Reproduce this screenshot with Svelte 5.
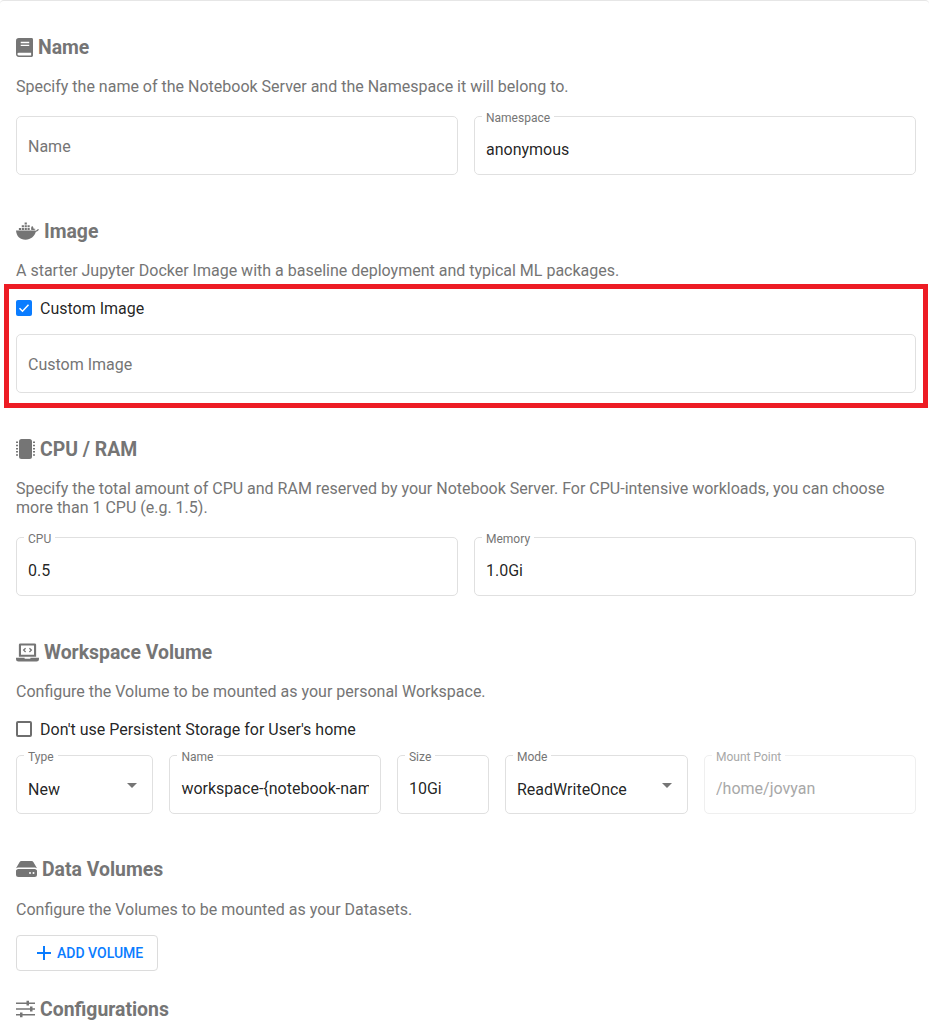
<script>
  const workspace = 'workspace-{notebook-name}';
</script>

<main>
  <section>
    <h2>
      <svg class="icon" width="17" height="19" viewBox="0 0 18 20">
        <path fill-rule="evenodd" d="M3 0h13.500A1.500 1.500 0 0 1 18 1.500V18.500A1.500 1.500 0 0 1 16.500 20H3a3 3 0 0 1-3-3V3a3 3 0 0 1 3-3zM5 4v1.500h9V4zM5 7v1.500h9V7zM3 15.500a1.500 1.500 0 0 0 0 3h13v-3z"/>
      </svg>
      Name
    </h2>
    <p>Specify the name of the Notebook Server and the Namespace it will belong to.</p>
    <div class="row two">
      <div class="field"><input placeholder="Name" readonly /></div>
      <div class="field"><span class="label">Namespace</span><input value="anonymous" readonly /></div>
    </div>
  </section>

  <section>
    <h2>
      <svg class="icon" width="23" height="18" viewBox="0 0 24 18">
        <path d="M0 8.500h19.500c.8.300 1.700 0 2.500-.9.500-.4 1.200-.5 2-.3-.6 1.500-1.800 2.500-3.300 2.600C19.200 15 15.500 18 10 18 4 18 .5 14.500 0 8.500z"/>
        <path d="M3 5.800h2.300v2.100H3zM6 5.800h2.300v2.100H6zM9 5.800h2.300v2.100H9zM12 5.800h2.300v2.100H12zM6 3h2.300v2.100H6zM9 3h2.300v2.100H9zM12 3h2.300v2.100H12zM9 .2h2.300v2.100H9z"/>
        <path d="M16 8c-.5-1.700-.2-3.200.8-4.300 1 .8 1.500 1.800 1.600 3 .7-.2 1.400-.1 2 .2-.4.700-1.200 1.100-2.200 1.100z"/>
      </svg>
      Image
    </h2>
    <p>A starter Jupyter Docker Image with a baseline deployment and typical ML packages.</p>
    <div class="highlight">
      <label class="check">
        <span class="box checked">
          <svg width="16" height="16" viewBox="0 0 16 16"><path d="M3.500 8.200l3 3 6-6.400" fill="none" stroke="#fff" stroke-width="1.500"/></svg>
        </span>
        Custom Image
      </label>
      <div class="field"><input placeholder="Custom Image" readonly /></div>
    </div>
  </section>

  <section class="cpu">
    <h2>
      <svg class="icon" width="19" height="20" viewBox="0 0 19 20">
        <rect x="3" y="0" width="13" height="20" rx="2.500"/>
        <path d="M0 2.500h2v1.500H0zM0 5.700h2v1.500H0zM0 8.900h2v1.500H0zM0 12.100h2v1.500H0zM0 15.300h2v1.500H0zM17 2.500h2v1.500h-2zM17 5.700h2v1.500h-2zM17 8.900h2v1.500h-2zM17 12.100h2v1.500h-2zM17 15.300h2v1.500h-2z"/>
      </svg>
      CPU / RAM
    </h2>
    <p>Specify the total amount of CPU and RAM reserved by your Notebook Server. For CPU-intensive workloads, you can choose more than 1 CPU (e.g. 1.5).</p>
    <div class="row two">
      <div class="field"><span class="label">CPU</span><input value="0.5" readonly /></div>
      <div class="field"><span class="label">Memory</span><input value="1.0Gi" readonly /></div>
    </div>
  </section>

  <section>
    <h2>
      <svg class="icon" width="23" height="19" viewBox="0 0 24 19">
        <path fill-rule="evenodd" d="M4.500 0h15A1.500 1.500 0 0 1 21 1.500V14H3V1.500A1.500 1.500 0 0 1 4.500 0zM5.200 2.200v9.600h13.600V2.200z"/>
        <path d="M0 15h9v1h6v-1h9v1.500A2.500 2.500 0 0 1 21.500 19h-19A2.500 2.500 0 0 1 0 16.500z"/>
        <path d="M10 5l-2 2 2 2M14 5l2 2-2 2" fill="none" stroke="#757575" stroke-width="1.400"/>
      </svg>
      Workspace Volume
    </h2>
    <p>Configure the Volume to be mounted as your personal Workspace.</p>
    <label class="check">
      <span class="box"></span>
      Don't use Persistent Storage for User's home
    </label>
    <div class="row volume">
      <div class="field"><span class="label">Type</span><div class="select">New</div></div>
      <div class="field"><span class="label">Name</span><input value={workspace} readonly /></div>
      <div class="field"><span class="label">Size</span><input value="10Gi" readonly /></div>
      <div class="field"><span class="label">Mode</span><div class="select">ReadWriteOnce</div></div>
      <div class="field disabled"><span class="label">Mount Point</span><input value="/home/jovyan" readonly /></div>
    </div>
  </section>

  <section class="data">
    <h2>
      <svg class="icon" width="21" height="16" viewBox="0 0 21 16">
        <path fill-rule="evenodd" d="M0 9.500A2.500 2.500 0 0 1 2.500 8h16A2.500 2.500 0 0 1 21 9.500v4A2.500 2.500 0 0 1 18.500 16h-16A2.500 2.500 0 0 1 0 13.500zM14 11a1 1 0 1 0 0 2 1 1 0 0 0 0-2zm3.500 0a1 1 0 1 0 0 2 1 1 0 0 0 0-2z"/>
        <path d="M0 7.200 3.500 1.200A2.500 2.500 0 0 1 5.500 0h10a2.500 2.500 0 0 1 2 1.200L21 7.200A4 4 0 0 0 18.500 6.500h-16A4 4 0 0 0 0 7.200z"/>
      </svg>
      Data Volumes
    </h2>
    <p>Configure the Volumes to be mounted as your Datasets.</p>
    <button>
      <svg width="14" height="14" viewBox="0 0 14 14"><path d="M6 0h2v6h6v2H8v6H6V8H0V6h6z" fill="#0a7cff"/></svg>
      ADD VOLUME
    </button>
  </section>

  <section class="last">
    <h2>
      <svg class="icon" width="19" height="18" viewBox="0 0 19 18">
        <path d="M0 2.400h10.500V.8H13v1.600h6v1.600h-6v1.600h-2.500V4H0zM0 8.200h14V6.600h2.500v1.600H19v1.600h-2.500v1.600H14V9.800H0zM0 14h4v-1.600h2.500V14H19v1.600H6.500v1.600H4v-1.600H0z"/>
      </svg>
      Configurations
    </h2>
  </section>
</main>

<style>
  :global(body) {
    background: #fff;
  }

  main {
    width: 929px;
    height: 1020px;
    box-sizing: border-box;
    overflow: hidden;
    padding: 0 13px 0 16px;
    border-top: 1px solid #e6e6e6;
    border-radius: 4px 4px 0 0;
    font-family: Roboto, "Liberation Sans", sans-serif;
    font-size: 16px;
    color: rgba(0, 0, 0, 0.87);
  }

  section {
    padding-top: 32px;
    margin-bottom: 10px;
  }

  section.cpu {
    padding-top: 17px;
  }

  section.data {
    padding-top: 31px;
  }

  section.data p {
    margin-top: 17px;
  }

  section.last {
    padding-top: 14px;
  }

  h2 {
    display: flex;
    align-items: center;
    gap: 5px;
    height: 28px;
    box-sizing: border-box;
    padding-top: 2px;
    margin: 0;
    font-size: 19.4px;
    line-height: 20px;
    font-weight: 700;
    color: #757575;
  }

  .icon {
    margin-top: -2px;
    fill: #757575;
    flex: none;
  }

  p {
    margin: 16px 0 20px;
    line-height: 19px;
    color: #757575;
  }

  .row {
    display: grid;
    gap: 16px;
  }

  .two {
    grid-template-columns: 1fr 1fr;
  }

  .volume {
    grid-template-columns: 137.4px 211.6px 92px 183px 212px;
  }

  .field {
    position: relative;
    height: 59px;
    box-sizing: border-box;
    border: 1px solid #e0e0e0;
    border-radius: 5px;
  }

  .label {
    position: absolute;
    top: -6px;
    left: 7px;
    padding: 0 4px;
    background: #fff;
    font-size: 12px;
    line-height: 15px;
    color: #757575;
  }

  input {
    width: 100%;
    height: 100%;
    box-sizing: border-box;
    padding: 2px 11px 0;
    border: 0;
    outline: 0;
    background: transparent;
    font: inherit;
    color: rgba(0, 0, 0, 0.87);
  }

  .label + input {
    padding-top: 8px;
  }

  input::placeholder {
    color: #757575;
    opacity: 1;
  }

  .select {
    position: relative;
    padding: 24px 11px 0;
    line-height: 19px;
  }

  .select::after {
    content: "";
    position: absolute;
    top: 27px;
    right: 15px;
    border-left: 5px solid transparent;
    border-right: 5px solid transparent;
    border-top: 5px solid #757575;
  }

  .disabled {
    border-color: #efefef;
  }

  .disabled .label,
  .disabled input {
    color: #a8a8a8;
  }

  .highlight {
    margin: -16px -12px 0;
    padding: 5px 7px 10px;
    border: 5px solid #ed1c24;
  }

  .check {
    display: flex;
    align-items: center;
    gap: 8px;
    height: 28px;
    margin-bottom: 12px;
    color: rgba(0, 0, 0, 0.87);
  }

  section > .check {
    margin-top: -6px;
  }

  .box {
    width: 16px;
    height: 16px;
    box-sizing: border-box;
    border: 2px solid #6e6e6e;
    border-radius: 2px;
  }

  .box.checked {
    border: 0;
    background: #0a7cff;
  }

  .box svg {
    display: block;
  }

  button {
    display: flex;
    align-items: center;
    gap: 6px;
    width: 142px;
    height: 36px;
    margin-top: -4px;
    padding: 0 0 0 20px;
    border: 1px solid #dcdcdc;
    border-radius: 4px;
    background: #fff;
    font-family: inherit;
    font-size: 14px;
    font-weight: 500;
    color: #0a7cff;
  }
</style>
